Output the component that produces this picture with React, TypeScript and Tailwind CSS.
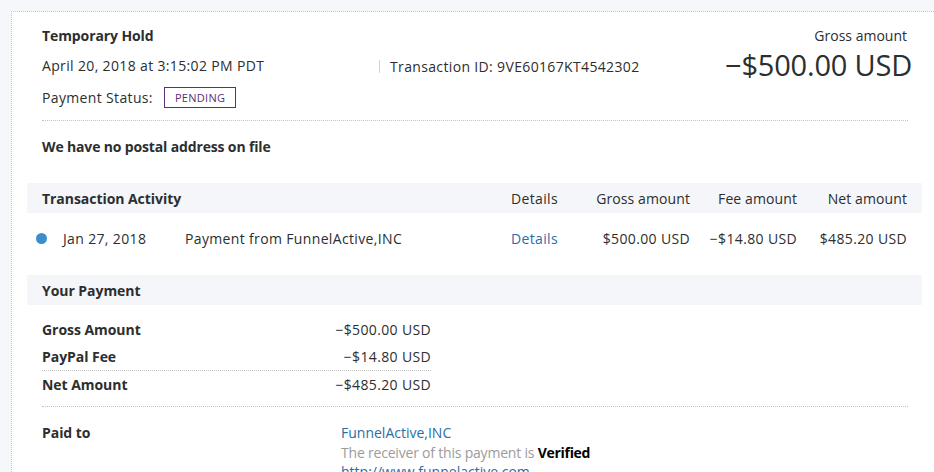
const font = { fontFamily: '"Open Sans", "Noto Sans", Arial, sans-serif' };

const activity = [
  {
    date: "Jan 27, 2018",
    desc: "Payment from FunnelActive,INC",
    gross: "$500.00 USD",
    fee: "−$14.80 USD",
    net: "$485.20 USD",
  },
];

const Dotted = ({ className = "" }: { className?: string }) => (
  <div className={`border-t border-dotted border-[#c4c4c4] ${className}`} />
);

export default function App() {
  return (
    <div
      className="w-[934px] h-[472px] overflow-hidden bg-[#f5f7fa] pl-[11px] pt-[11px] text-[14px] tracking-[0.35px] text-[#2c2e2f]"
      style={font}
    >
      <div className="h-full bg-white border-l border-t border-dotted border-[#c4c4c4] pl-[15px] pr-[12px]">
        {/* summary */}
        <div className="flex px-[15px] pt-[14px]">
          <div className="w-[337px] flex flex-col">
            <div className="h-[20px] leading-[20px] font-bold tracking-[-0.1px]">Temporary Hold</div>
            <div className="h-[20px] leading-[20px] mt-[10px]">April 20, 2018 at 3:15:02 PM PDT</div>
            <div className="flex items-center mt-[10px] h-[22px]">
              <span>Payment Status:</span>
              <span className="ml-[11px] border border-[#5a2d7e] text-[#5a2d7e] text-[11px] px-[10px] h-[21px] leading-[19px] tracking-[0.3px]">
                PENDING
              </span>
            </div>
          </div>
          <div className="flex items-start pt-[30px]">
            <div className="flex items-center h-[20px]">
              <span className="w-px h-[13px] bg-[#d6d0d8] mr-[10px]" />
              <span>Transaction ID: 9VE60167KT4542302</span>
            </div>
          </div>
          <div className="ml-auto flex flex-col items-end">
            <div className="h-[20px] leading-[20px] tracking-normal">Gross amount</div>
            <div className="text-[29px] leading-[36px] mr-[-5px] mt-[1px] tracking-[-0.2px]">
              −$500.00 USD
            </div>
          </div>
        </div>

        <Dotted className="mx-[15px] mt-[12px] mr-[14px]" />

        <div className="px-[15px] mt-[16px] h-[20px] leading-[20px] font-bold tracking-[-0.15px]">
          We have no postal address on file
        </div>

        {/* transaction activity */}
        <div className="mt-[26px] h-[30px] bg-[#f5f6f9] flex items-center px-[15px]">
          <div className="font-bold flex-1 tracking-[-0.05px]">Transaction Activity</div>
          <div className="w-[46px] text-center">Details</div>
          <div className="w-[133px] text-right tracking-[0.1px]">Gross amount</div>
          <div className="w-[107px] text-right tracking-[0.1px]">Fee amount</div>
          <div className="w-[110px] text-right tracking-[0.1px]">Net amount</div>
        </div>
        {activity.map((a) => (
          <div key={a.date} className="h-[50px] flex items-center px-[9px]">
            <span className="w-[11px] h-[11px] rounded-full bg-[#3d8dcb]" />
            <span className="ml-[16px] w-[122px]">{a.date}</span>
            <span className="flex-1">{a.desc}</span>
            <span className="w-[46px] text-center text-[#2a6ea6]">Details</span>
            <span className="w-[133px] text-right">{a.gross}</span>
            <span className="w-[107px] text-right">{a.fee}</span>
            <span className="w-[110px] text-right mr-[6px]">{a.net}</span>
          </div>
        ))}

        {/* your payment */}
        <div className="mt-[12px] h-[30px] bg-[#f5f6f9] flex items-center px-[15px] font-bold tracking-[-0.05px]">
          Your Payment
        </div>
        <div className="px-[15px] pt-[15px]">
          <div className="w-[389px]">
            <div className="flex justify-between h-[20px] leading-[20px]">
              <span className="font-bold tracking-[-0.05px]">Gross Amount</span>
              <span>−$500.00 USD</span>
            </div>
            <div className="flex justify-between h-[20px] leading-[20px] mt-[7px]">
              <span className="font-bold tracking-[-0.05px]">PayPal Fee</span>
              <span>−$14.80 USD</span>
            </div>
            <Dotted className="mt-[3px]" />
            <div className="flex justify-between h-[20px] leading-[20px] mt-[4px]">
              <span className="font-bold tracking-[-0.05px]">Net Amount</span>
              <span>−$485.20 USD</span>
            </div>
          </div>
          <Dotted className="mt-[11px] mr-[-1px]" />
          <div className="flex mt-[16px]">
            <div className="w-[299px] font-bold h-[20px] leading-[20px] tracking-[-0.05px]">Paid to</div>
            <div className="flex flex-col tracking-normal">
              <span className="h-[20px] leading-[20px] text-[#2a6ea6]">FunnelActive,INC</span>
              <span className="leading-[20px] text-[#9b9b9b] tracking-[-0.2px]">
                The receiver of this payment is <b className="text-[#000] tracking-[-0.3px]">Verified</b>
              </span>
              <span className="leading-[18px] text-[#2a6ea6]">http://www.funnelactive.com</span>
            </div>
          </div>
        </div>
      </div>
    </div>
  );
}
